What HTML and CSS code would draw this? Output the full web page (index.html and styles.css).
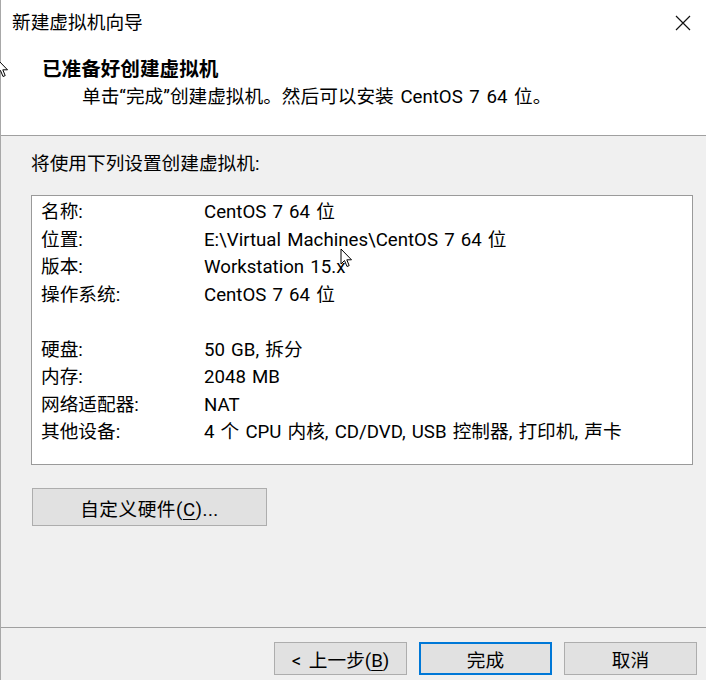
FILE: index.html
```html
<!DOCTYPE html>
<html lang="zh-CN">
<head>
<meta charset="utf-8">
<title>新建虚拟机向导</title>
<link rel="stylesheet" href="styles.css">
</head>
<body>
<div class="window">
  <div class="titlebar">
    <span class="title">新建虚拟机向导</span>
    <svg class="close" width="16" height="16" viewBox="0 0 16 16"><path d="M1 1 L15 15 M15 1 L1 15" stroke="#111" stroke-width="1.2" fill="none"/></svg>
  </div>
  <div class="header">
    <div class="h-title">已准备好创建虚拟机</div>
    <div class="h-sub">单击“完成”创建虚拟机。然后可以安装 CentOS 7 64 位。</div>
  </div>
  <div class="main">
    <div class="intro">将使用下列设置创建虚拟机:</div>
    <div class="summary">
      <div class="row"><span class="lbl">名称:</span><span class="val">CentOS 7 64 位</span></div>
      <div class="row"><span class="lbl">位置:</span><span class="val">E:\Virtual Machines\CentOS 7 64 位</span></div>
      <div class="row"><span class="lbl">版本:</span><span class="val">Workstation 15.x</span></div>
      <div class="row"><span class="lbl">操作系统:</span><span class="val">CentOS 7 64 位</span></div>
      <div class="row blank"></div>
      <div class="row"><span class="lbl">硬盘:</span><span class="val">50 GB, 拆分</span></div>
      <div class="row"><span class="lbl">内存:</span><span class="val">2048 MB</span></div>
      <div class="row"><span class="lbl">网络适配器:</span><span class="val">NAT</span></div>
      <div class="row"><span class="lbl">其他设备:</span><span class="val">4 个 CPU 内核, CD/DVD, USB 控制器, 打印机, 声卡</span></div>
    </div>
    <button class="btn custom">自定义硬件(<u>C</u>)...</button>
  </div>
  <div class="footer">
    <button class="btn nav back">&lt; 上一步(<u>B</u>)</button>
    <button class="btn nav primary">完成</button>
    <button class="btn nav">取消</button>
  </div>
  <svg class="cursor cursor-a" width="14" height="21" viewBox="0 0 14 21"><path d="M1 1 L1 16 L4.5 12.5 L7 18.5 L9.2 17.6 L6.8 11.8 L11.5 11.8 Z" fill="#fff" stroke="#000" stroke-width="1" stroke-linejoin="round"/></svg>
  <svg class="cursor cursor-b" width="14" height="21" viewBox="0 0 14 21"><path d="M1 1 L1 16 L4.5 12.5 L7 18.5 L9.2 17.6 L6.8 11.8 L11.5 11.8 Z" fill="#fff" stroke="#000" stroke-width="1" stroke-linejoin="round"/></svg>
</div>
</body>
</html>
```

FILE: styles.css
```css
html, body {
  margin: 0;
  padding: 0;
}
body {
  width: 706px;
  height: 680px;
  overflow: hidden;
  background: #f0f0f0;
  font-family: Roboto, "Noto Sans CJK SC", sans-serif;
  font-size: 18.67px;
  color: #000;
}
.window {
  position: relative;
  height: 680px;
  display: flex;
  flex-direction: column;
  border-left: 1px solid #a8a8a8;
  box-sizing: border-box;
}
.titlebar {
  height: 45px;
  background: #fff;
  display: flex;
  align-items: center;
  justify-content: space-between;
  padding: 0 15px 0 11px;
}
.title {
  font-size: 18.7px;
  line-height: 26px;
}
.close {
  display: block;
}
.header {
  background: #fff;
  padding: 12px 0 24px 41px;
  border-bottom: 1px solid #a0a0a0;
}
.h-title {
  font-weight: bold;
  font-size: 19.6px;
  line-height: 26px;
}
.h-sub {
  margin-left: 40px;
  line-height: 28px;
  word-spacing: 2px;
}
.main {
  flex: 1;
  padding: 15px 0 0 30px;
}
.intro {
  line-height: 27px;
}
.summary {
  margin-top: 17px;
  width: 662px;
  height: 270px;
  box-sizing: border-box;
  background: #fff;
  border: 1px solid #9a9a9a;
  padding: 3px 0 0 9px;
}
.row {
  display: grid;
  grid-template-columns: 163px 1fr;
  height: 27.5px;
  line-height: 27.5px;
  white-space: nowrap;
}
.val {
  word-spacing: 1.5px;
}
.btn {
  font-family: inherit;
  font-size: 18.67px;
  color: #000;
  background: #e1e1e1;
  border: 1px solid #adadad;
  padding: 0;
  margin: 0;
  box-sizing: border-box;
}
.btn u {
  text-underline-offset: 3px;
}
.custom {
  display: block;
  margin: 23px 0 0 1px;
  width: 235px;
  height: 38px;
  letter-spacing: 0.5px;
}
.footer {
  border-top: 1px solid #a0a0a0;
  padding: 14px 9px 0 0;
  height: 53px;
  box-sizing: border-box;
  display: flex;
  justify-content: flex-end;
  gap: 12px;
}
.nav {
  width: 133px;
  height: 33px;
}
.back {
  word-spacing: 3px;
}
.primary {
  border: 2px solid #0078d7;
}
.cursor {
  position: absolute;
}
.cursor-a {
  left: -5px;
  top: 58px;
}
.cursor-b {
  left: 339px;
  top: 248px;
}
```
